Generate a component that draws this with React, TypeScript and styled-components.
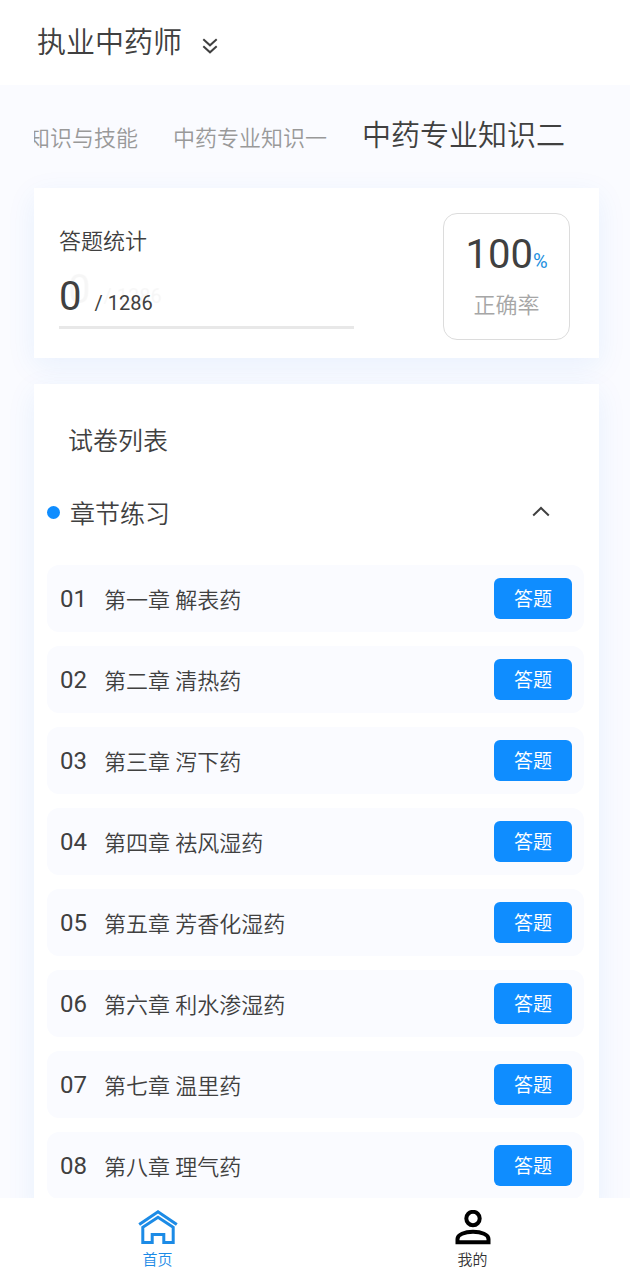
import React, { useState } from 'react';
import styled, { createGlobalStyle } from 'styled-components';

const GlobalStyle = createGlobalStyle`
  * { box-sizing: border-box; }
  body {
    margin: 0;
    background: #fafbff;
    color: #404040;
    font-family: Roboto, "Noto Sans CJK SC", sans-serif;
    font-weight: 350;
  }
  button {
    border: 0;
    padding: 0;
    background: none;
    color: inherit;
    font: inherit;
    cursor: pointer;
  }
  h1, h2, h3, p, ul, ol { margin: 0; padding: 0; font-weight: inherit; }
  ul, ol { list-style: none; }
`;

const Page = styled.div`
  display: flex;
  flex-direction: column;
  height: 100vh;
`;

const Header = styled.header`
  flex: none;
  padding: 21px 37px 20px;
  background: #fff;
`;

const SubjectButton = styled.button`
  display: flex;
  align-items: center;
  gap: 20px;
  font-size: 29px;
  line-height: 44px;

  svg { margin-top: 6px; }
`;

const Content = styled.main`
  flex: 1;
  min-height: 0;
  padding: 0 31px 0 34px;
  overflow-y: auto;
  scrollbar-width: none;
`;

const Tabs = styled.nav`
  display: flex;
  justify-content: flex-end;
  align-items: baseline;
  gap: 35px;
  height: 103px;
  padding: 29px 34px 0 0;
  overflow: hidden;
`;

const Tab = styled.button<{ $active?: boolean }>`
  flex: none;
  color: ${(p) => (p.$active ? '#404040' : '#999')};
  font-size: ${(p) => (p.$active ? 29 : 22)}px;
  line-height: 44px;
  white-space: nowrap;
`;

const Card = styled.section`
  background: #fff;
  box-shadow: 0 8px 28px rgba(20, 120, 230, 0.08);
`;

const StatsCard = styled(Card)`
  display: flex;
  justify-content: space-between;
  align-items: flex-start;
  gap: 24px;
  margin-bottom: 26px;
  padding: 25px 29px 18px 25px;
`;

const Progress = styled.div`
  flex: 0 1 295px;
  padding-top: 13px;
`;

const StatsTitle = styled.h2`
  font-size: 22px;
  line-height: 32px;
`;

const Count = styled.p`
  display: flex;
  align-items: baseline;
  gap: 13px;
  margin-top: 16px;
  font-size: 20px;
  font-weight: 400;
  line-height: 46px;
  text-shadow: 9px -7px 1px #f6f6f6;
`;

const BigNumber = styled.span`
  font-size: 40px;
  font-weight: 400;
`;

const Track = styled.div`
  height: 3px;
  background: #e8e8e8;
`;

const Accuracy = styled.div`
  display: flex;
  flex-direction: column;
  align-items: center;
  width: 127px;
  height: 127px;
  padding-top: 17px;
  border: 1px solid #dcdcdc;
  border-radius: 14px;
`;

const Rate = styled.p`
  line-height: 48px;
`;

const Percent = styled.span`
  color: #1c8fe0;
  font-size: 20px;
  font-weight: 400;
`;

const RateLabel = styled.p`
  margin-top: 3px;
  color: #a6a6a6;
  font-size: 22px;
  line-height: 32px;
`;

const ListCard = styled(Card)`
  padding: 39px 15px 14px 13px;
`;

const ListTitle = styled.h2`
  padding-left: 21px;
  font-size: 25px;
  line-height: 38px;
`;

const SectionToggle = styled.button`
  display: flex;
  align-items: center;
  width: 100%;
  margin: 32px 0 34px;
  padding-right: 34px;
  font-size: 25px;
  line-height: 38px;
  text-align: left;
`;

const Dot = styled.span`
  width: 13px;
  height: 13px;
  margin-right: 10px;
  border-radius: 50%;
  background: #0f8dff;
`;

const SectionName = styled.span`
  flex: 1;
  padding-top: 6px;
  line-height: 32px;
`;

const Chapters = styled.ol`
  display: flex;
  flex-direction: column;
  gap: 14px;
`;

const Chapter = styled.li`
  display: flex;
  align-items: center;
  height: 67px;
  padding: 0 12px 0 13px;
  border-radius: 12px;
  background: #fafbff;
`;

const ChapterNumber = styled.span`
  width: 44px;
  font-size: 24px;
  font-weight: 400;
  line-height: 32px;
`;

const ChapterName = styled.span`
  flex: 1;
  padding-top: 4px;
  font-size: 22px;
  line-height: 32px;
`;

const AnswerButton = styled.button`
  width: 78px;
  height: 41px;
  padding-bottom: 2px;
  border-radius: 6px;
  background: #0f8dff;
  color: #fff;
  font-size: 19px;
  font-weight: 400;
`;

const BottomBar = styled.nav`
  display: flex;
  flex: none;
  height: 82px;
  background: #fff;
`;

const BottomLink = styled.a<{ $active?: boolean }>`
  display: flex;
  flex: 1;
  flex-direction: column;
  align-items: center;
  gap: 4px;
  padding-top: 12px;
  color: ${(p) => (p.$active ? '#1c8be6' : '#333')};
  font-size: 15px;
  line-height: 22px;
  text-decoration: none;
`;

const DoubleChevron = () => (
  <svg width="16" height="16" viewBox="0 0 16 16" fill="none" stroke="#404040" strokeWidth="2" aria-hidden="true">
    <path d="M1.3 1.3 8 7.3l6.700-6M1.300 8.300 8 14.300l6.700-6" />
  </svg>
);

const Chevron = ({ open }: { open: boolean }) => (
  <svg width="18" height="12" viewBox="0 0 18 12" fill="none" stroke="#404040" strokeWidth="2" aria-hidden="true">
    <path d={open ? 'M1.200 9.500 9 2l7.800 7.500' : 'M1.200 2 9 9.500 16.800 2'} />
  </svg>
);

const HomeIcon = () => (
  <svg width="40" height="35" viewBox="0 0 40 35" fill="none" stroke="#1c8be6" strokeWidth="3" aria-hidden="true">
    <path d="M1.200 14.500 20 1.800l18.800 12.700" />
    <path d="M4.800 32.500V17.300L20 7.300l15.200 10v15.200h-9.400v-8H14.200v8z" />
  </svg>
);

const PersonIcon = () => (
  <svg width="36" height="35" viewBox="0 0 36 35" fill="none" stroke="#000" strokeWidth="4" aria-hidden="true">
    <circle cx="18" cy="8.500" r="6.700" />
    <path d="M2.500 32.300V29c0-4.500 7-7.200 15.500-7.200S33.500 24.500 33.500 29v3.300z" />
  </svg>
);

const chapters = [
  '第一章 解表药',
  '第二章 清热药',
  '第三章 泻下药',
  '第四章 祛风湿药',
  '第五章 芳香化湿药',
  '第六章 利水渗湿药',
  '第七章 温里药',
  '第八章 理气药',
];

const subjects = ['知识与技能', '中药专业知识一', '中药专业知识二'];

export default function App() {
  const [subject, setSubject] = useState(2);
  const [open, setOpen] = useState(true);

  return (
    <Page>
      <GlobalStyle />
      <Header>
        <h1>
          <SubjectButton type="button">
            执业中药师
            <DoubleChevron />
          </SubjectButton>
        </h1>
      </Header>

      <Content>
        <Tabs>
          {subjects.map((name, i) => (
            <Tab key={name} type="button" $active={i === subject} onClick={() => setSubject(i)}>
              {name}
            </Tab>
          ))}
        </Tabs>

        <StatsCard>
          <Progress>
            <StatsTitle>答题统计</StatsTitle>
            <Count>
              <BigNumber>0</BigNumber>
              <span>/ 1286</span>
            </Count>
            <Track />
          </Progress>
          <Accuracy>
            <Rate>
              <BigNumber>100</BigNumber>
              <Percent>%</Percent>
            </Rate>
            <RateLabel>正确率</RateLabel>
          </Accuracy>
        </StatsCard>

        <ListCard>
          <ListTitle>试卷列表</ListTitle>
          <SectionToggle type="button" aria-expanded={open} onClick={() => setOpen(!open)}>
            <Dot />
            <SectionName>章节练习</SectionName>
            <Chevron open={open} />
          </SectionToggle>
          {open && (
            <Chapters>
              {chapters.map((name, i) => (
                <Chapter key={name}>
                  <ChapterNumber>{String(i + 1).padStart(2, '0')}</ChapterNumber>
                  <ChapterName>{name}</ChapterName>
                  <AnswerButton type="button">答题</AnswerButton>
                </Chapter>
              ))}
            </Chapters>
          )}
        </ListCard>
      </Content>

      <BottomBar>
        <BottomLink href="#home" $active>
          <HomeIcon />
          首页
        </BottomLink>
        <BottomLink href="#me">
          <PersonIcon />
          我的
        </BottomLink>
      </BottomBar>
    </Page>
  );
}
